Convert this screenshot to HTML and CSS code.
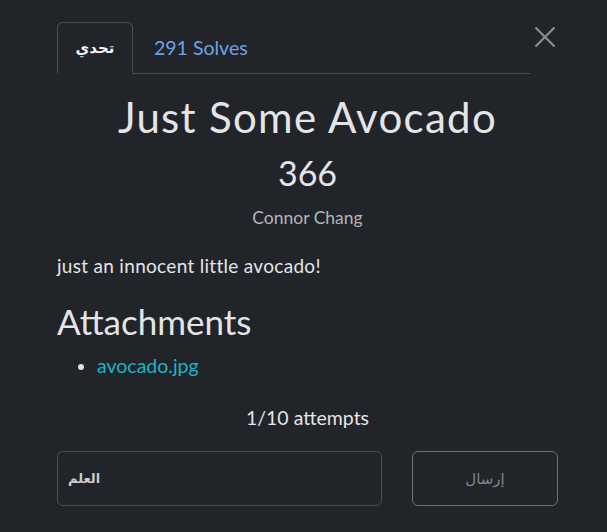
FILE: index.html
```html
<!DOCTYPE html>
<html lang="en">
<head>
<meta charset="utf-8">
<link rel="stylesheet" href="styles.css">
</head>
<body>
<div class="modal">
  <button class="close" aria-label="Close">
    <svg width="22" height="22" viewBox="0 0 22 22"><path d="M1.5 1.5L20.5 20.5M20.5 1.5L1.5 20.5" stroke="#8a8d92" stroke-width="2.2" fill="none"/></svg>
  </button>
  <div class="content">
    <nav class="tabs">
      <span class="tab active">تحدي</span>
      <span class="tab link">291 Solves</span>
    </nav>
    <h1 class="title">Just Some Avocado</h1>
    <div class="value">366</div>
    <div class="author">Connor Chang</div>
    <p class="desc">just an innocent little avocado!</p>
    <h2 class="attach">Attachments</h2>
    <ul class="files"><li><a href="#">avocado.jpg</a></li></ul>
    <div class="attempts">1/10 attempts</div>
    <div class="form">
      <div class="input">العلم</div>
      <div class="submit">إرسال</div>
    </div>
  </div>
</div>
</body>
</html>
```
FILE: styles.css
```css
html, body {
  margin: 0;
  background: #212429;
  height: 100%;
}
body {
  font-family: Lato, "DejaVu Sans", sans-serif;
  color: #dee2e6;
}
.modal {
  position: relative;
  padding: 22px 49px 0 57px;
}
.close {
  position: absolute;
  top: 26px;
  left: 534px;
  background: none;
  border: 0;
  padding: 0;
  width: 22px;
  height: 22px;
}
.content {
  width: 501px;
}
.tabs {
  display: flex;
  align-items: stretch;
  border-bottom: 1px solid #4b4f55;
  width: 473px;
  height: 51px;
}
.tab {
  display: flex;
  align-items: center;
  justify-content: center;
}
.tab.active {
  width: 74px;
  border: 1px solid #4b4f55;
  border-bottom: 1px solid #212429;
  margin-bottom: -1px;
  border-radius: 6px 6px 0 0;
  color: #f3f4f6;
  font-family: "DejaVu Sans", sans-serif;
  font-weight: bold;
  font-size: 15px;
}
.tab.link {
  color: #6ea3ea;
  padding: 0 21px;
  font-size: 19.5px;
}
.title {
  margin: 18px 0 0;
  text-align: center;
  font-size: 42px;
  font-weight: 400;
  letter-spacing: 1.3px;
  line-height: 50px;
  color: #e3e5e8;
}
.value {
  text-align: center;
  font-size: 34px;
  line-height: 40px;
  margin-top: 11px;
  color: #e3e5e8;
}
.author {
  text-align: center;
  font-size: 17.5px;
  line-height: 21px;
  color: #b3b6ba;
  margin-top: 14px;
}
.desc {
  margin: 26px 0 0;
  font-size: 19px;
  line-height: 23px;
  letter-spacing: 0.3px;
  color: #e3e5e8;
}
.attach {
  margin: 23px 0 0;
  font-size: 35px;
  font-weight: 400;
  line-height: 42px;
  color: #e3e5e8;
}
.files {
  margin: 12px 0 0;
  padding-left: 40px;
  font-size: 19.5px;
  line-height: 24px;
}
.files a {
  color: #1db3c7;
  text-decoration: none;
}
.attempts {
  text-align: center;
  font-size: 19.5px;
  line-height: 24px;
  margin-top: 28px;
  color: #e3e5e8;
}
.form {
  display: grid;
  grid-template-columns: 325px 146px;
  column-gap: 30px;
  margin-top: 21px;
}
.input, .submit {
  height: 53px;
  border: 1px solid #4b4f55;
  border-radius: 6px;
  display: flex;
  align-items: center;
  font-family: "DejaVu Sans", sans-serif;
}
.input {
  padding-left: 10px;
  color: #c9ccd0;
  font-weight: bold;
  font-size: 13px;
}
.submit {
  justify-content: center;
  border-color: #6c7178;
  color: #82868b;
  font-size: 15px;
}
```
